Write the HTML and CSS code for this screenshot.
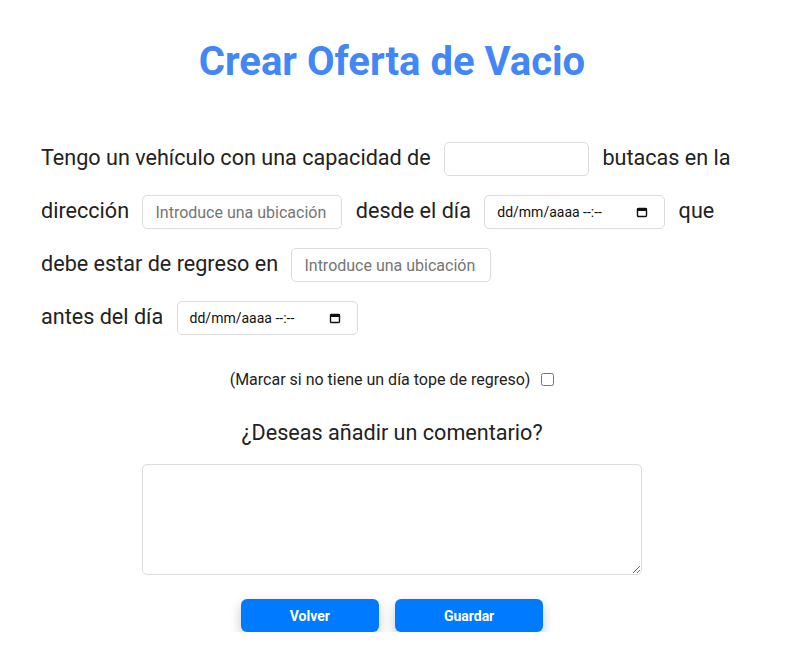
FILE: index.html
```html
<!DOCTYPE html>
<html lang="es">
<head>
<meta charset="utf-8">
<title>Crear Oferta de Vacio</title>
<link rel="stylesheet" href="styles.css">
</head>
<body>
<main class="page">
  <h1 class="title">Crear Oferta de Vacio</h1>
  <p class="sentence">Tengo un vehículo con una capacidad de <input class="field field-num" type="number"> butacas en la<br>dirección <input class="field field-loc" type="text" placeholder="Introduce una ubicación"> desde el día <span class="field field-date"><span class="date-text">dd/mm/aaaa --:--</span><svg class="cal" viewBox="0 0 12 12" width="12" height="12"><rect x="1.5" y="2.5" width="9" height="8" rx="1" fill="none" stroke="#111" stroke-width="1.4"/><rect x="1" y="2" width="10" height="3" fill="#111"/></svg></span> que<br>debe estar de regreso en <input class="field field-loc" type="text" placeholder="Introduce una ubicación"><br>antes del día <span class="field field-date"><span class="date-text">dd/mm/aaaa --:--</span><svg class="cal" viewBox="0 0 12 12" width="12" height="12"><rect x="1.5" y="2.5" width="9" height="8" rx="1" fill="none" stroke="#111" stroke-width="1.4"/><rect x="1" y="2" width="10" height="3" fill="#111"/></svg></span></p>
  <label class="check-row">(Marcar si no tiene un día tope de regreso) <input type="checkbox" class="check"></label>
  <h2 class="comment-title">¿Deseas añadir un comentario?</h2>
  <div class="comment-wrap"><textarea class="comment"></textarea></div>
  <div class="actions">
    <button class="btn">Volver</button>
    <button class="btn">Guardar</button>
  </div>
</main>
</body>
</html>
```

FILE: styles.css
```css
html, body {
  margin: 0;
  padding: 0;
  background: #fff;
}
body {
  font-family: Roboto, "Noto Sans", Arial, sans-serif;
  color: #222;
}
.page {
  width: 784px;
}
.title {
  margin: 38px 0 0;
  font-size: 40px;
  font-weight: 700;
  line-height: 47px;
  text-align: center;
  color: #4287f5;
}
.sentence {
  margin: 46px 0 0;
  padding: 0 41px;
  font-size: 21.6px;
  line-height: 53px;
  color: #222;
}
.field {
  box-sizing: border-box;
  display: inline-block;
  height: 34px;
  margin: 0 8px;
  vertical-align: middle;
  border: 1px solid #dcdcdc;
  border-radius: 5px;
  background: #fff;
  font-family: Roboto, Arial, sans-serif;
  font-size: 16px;
  padding: 0 12px;
  color: #222;
  outline: none;
}
.field::placeholder {
  color: #757575;
}
.field-num {
  width: 145px;
  -moz-appearance: textfield;
}
.field-num::-webkit-inner-spin-button,
.field-num::-webkit-outer-spin-button {
  -webkit-appearance: none;
  margin: 0;
}
.field-loc {
  width: 200px;
}
.field-date {
  width: 181px;
  display: inline-flex;
  align-items: center;
  justify-content: space-between;
  padding: 0 16px 0 12px;
  line-height: 1;
}
.date-text {
  font-size: 14px;
  color: #111;
}
.cal {
  display: block;
}
.check-row {
  display: flex;
  justify-content: center;
  align-items: center;
  gap: 11px;
  margin-top: 27px;
  font-size: 16px;
  line-height: 19px;
  color: #222;
}
.check {
  margin: 0;
  width: 13px;
  height: 13px;
}
.comment-title {
  margin: 31px 0 0;
  font-size: 21.6px;
  font-weight: 400;
  line-height: 26px;
  text-align: center;
  color: #222;
}
.comment-wrap {
  display: flex;
  justify-content: center;
  margin-top: 18px;
}
.comment {
  box-sizing: border-box;
  display: block;
  width: 500px;
  height: 111px;
  border: 1px solid #dcdcdc;
  border-radius: 5px;
  outline: none;
  font-family: Roboto, Arial, sans-serif;
}
.actions {
  display: flex;
  justify-content: center;
  gap: 16px;
  margin-top: 24px;
}
.btn {
  height: 33px;
  padding: 0 49px;
  border: none;
  border-radius: 6px;
  background: #007bff;
  color: #fff;
  font-family: Roboto, Arial, sans-serif;
  font-size: 14px;
  font-weight: 700;
  box-shadow: 0 5px 12px rgba(0, 0, 0, 0.22);
  cursor: pointer;
}
```
